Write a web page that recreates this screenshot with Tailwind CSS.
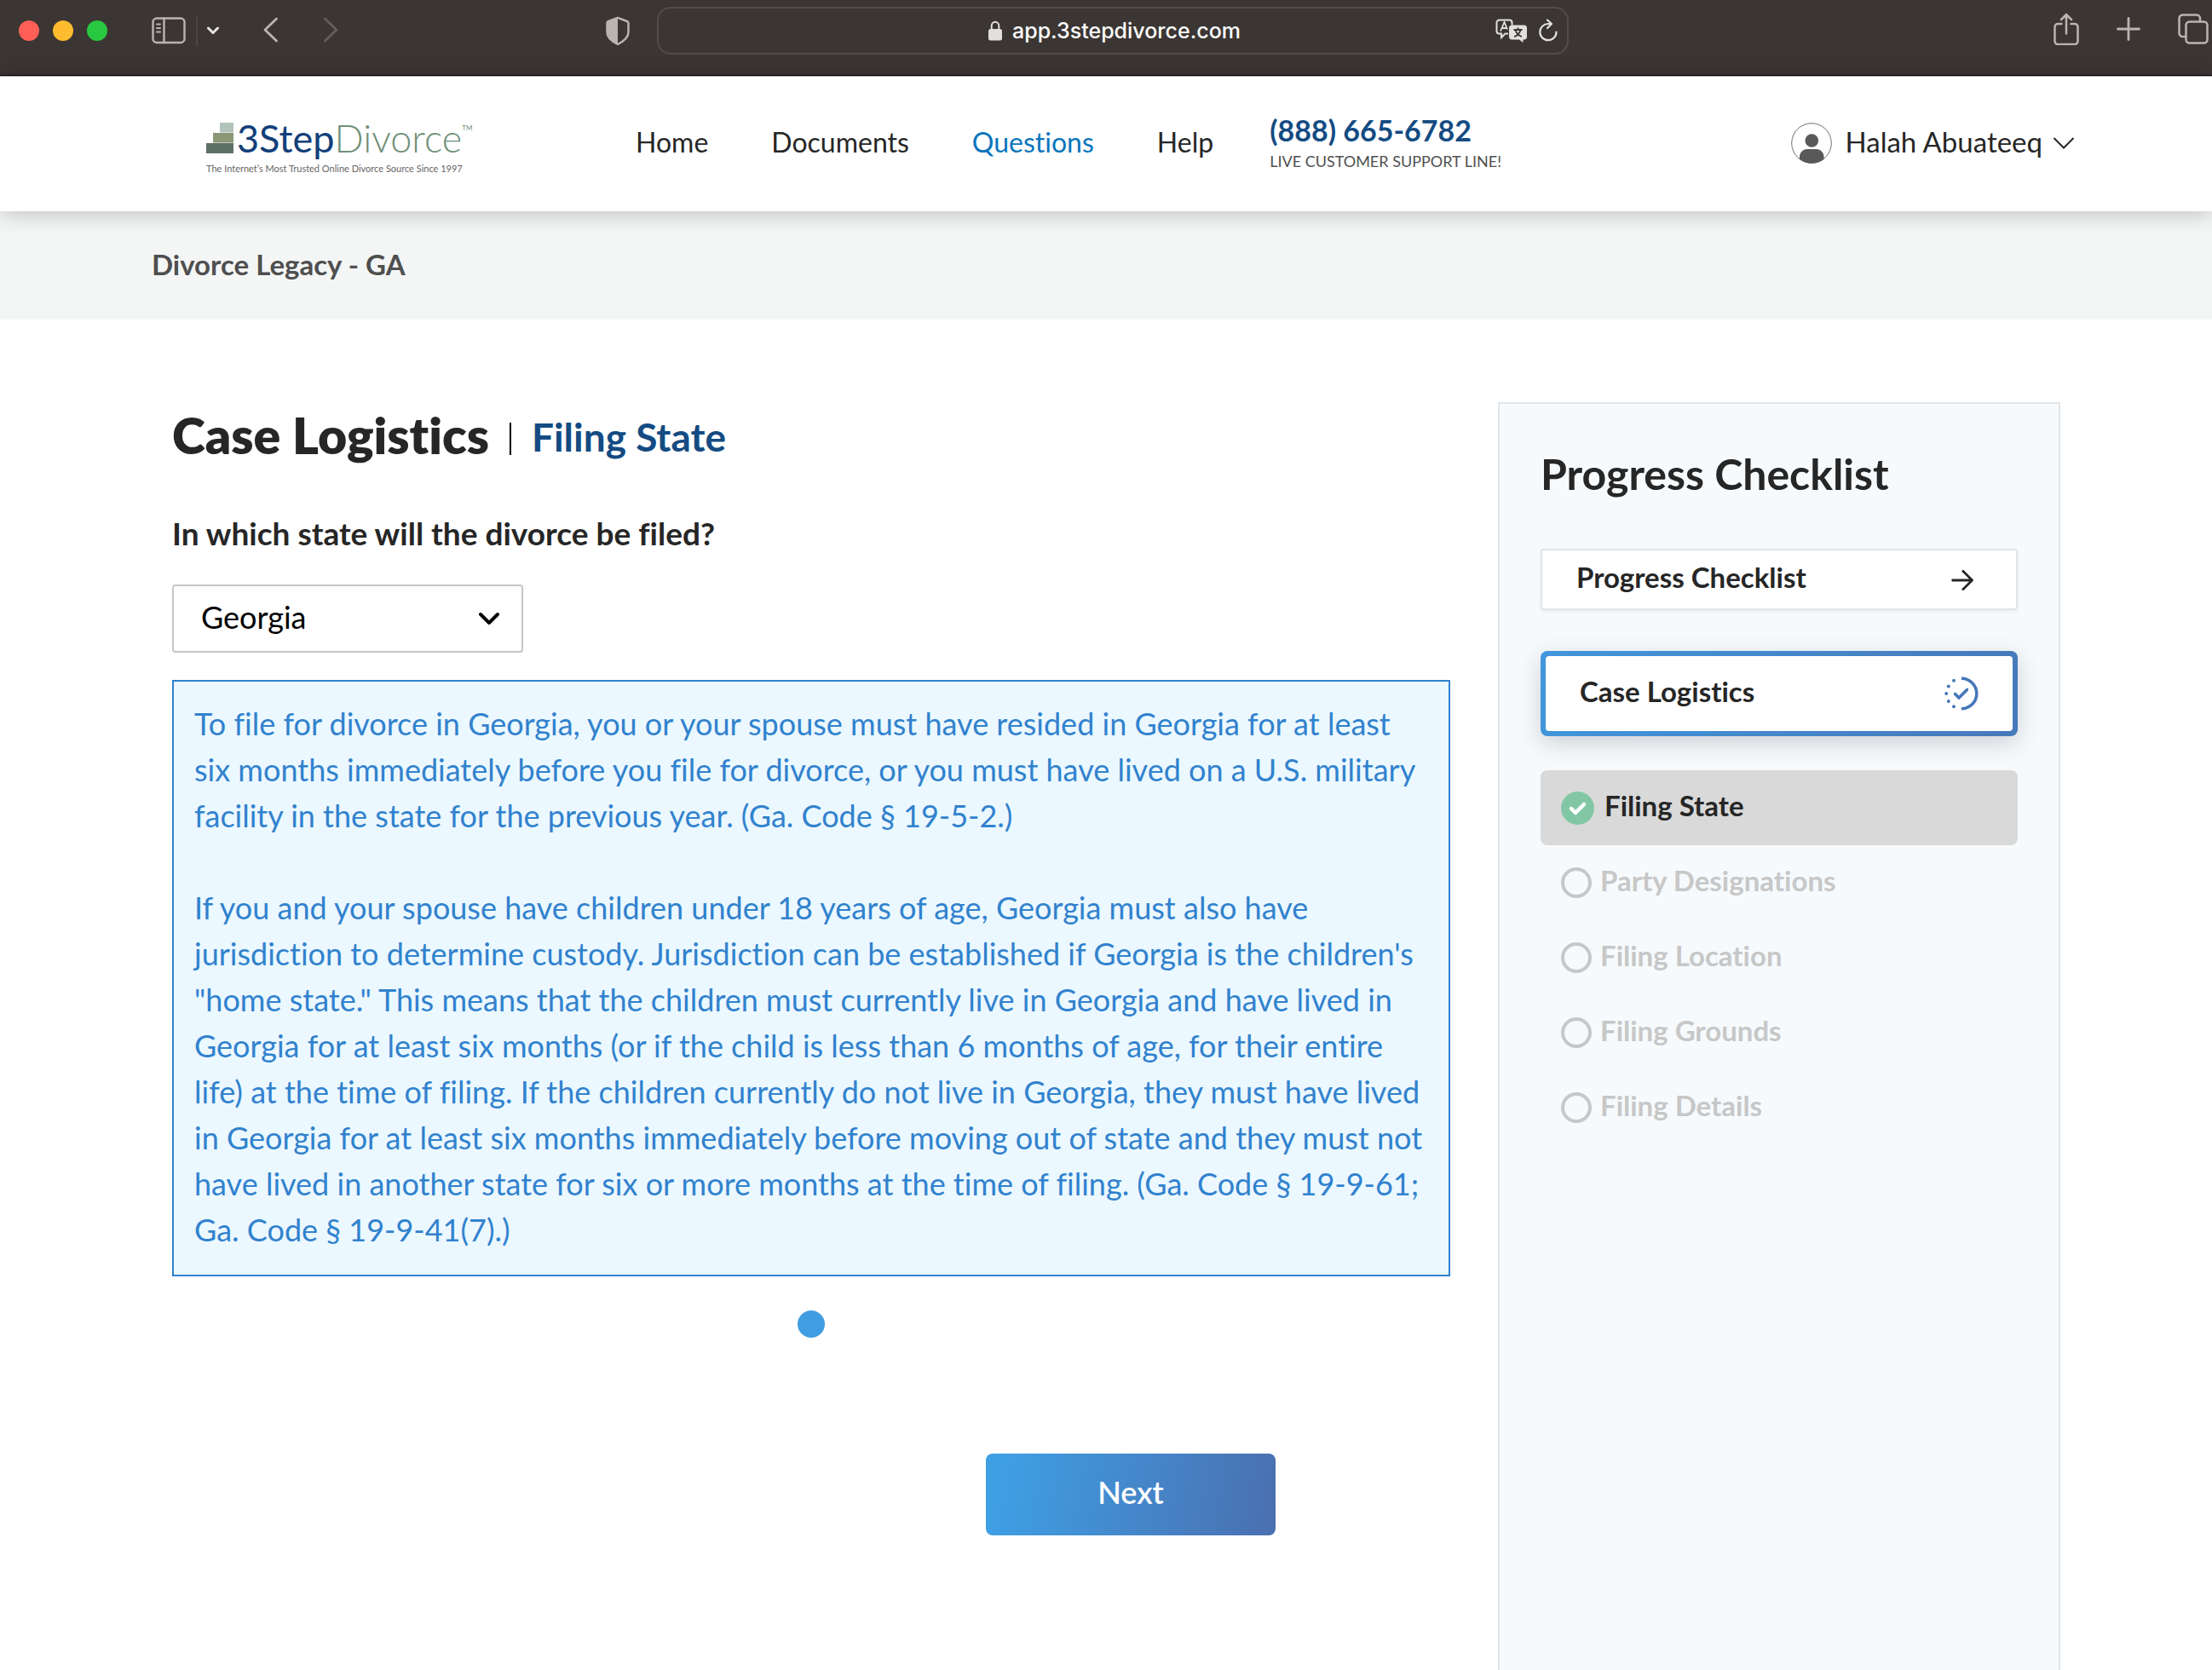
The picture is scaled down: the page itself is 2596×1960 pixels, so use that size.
<!DOCTYPE html>
<html lang="en">
<head>
<meta charset="utf-8">
<meta name="viewport" content="width=device-width, initial-scale=1">
<title>3StepDivorce - Case Logistics</title>
<script src="https://cdn.jsdelivr.net/npm/@tailwindcss/browser@4"></script>
</head>
<body class="flex min-h-screen flex-col bg-white font-[Lato,sans-serif] text-[#262626] [font-variant-ligatures:none]">

<!-- Browser toolbar -->
<div class="flex h-[89px] shrink-0 items-center border-b border-black bg-[#3b3633] pr-1 pb-4 pl-[22px] text-[#bab4b1]">
  <div class="flex gap-4">
    <span class="size-6 rounded-full bg-[#ff5f57]"></span>
    <span class="size-6 rounded-full bg-[#febc2e]"></span>
    <span class="size-6 rounded-full bg-[#28c840]"></span>
  </div>
  <button aria-label="Sidebar" class="ml-[52px]"><svg class="h-8 w-10" viewBox="0 0 40 32" fill="none" stroke="currentColor" stroke-width="2.4" stroke-linecap="round"><rect x="1.5" y="1.5" width="37" height="28.500" rx="4.500"/><path d="M14.500 2v28"/><path d="M6 8.500h4M6 13h4M6 17.500h4" stroke-width="2"/></svg></button>
  <span class="ml-3 h-9 w-0.5 bg-[#4a4542]"></span>
  <button aria-label="Tab groups" class="ml-[10px] text-[#e8e5e3]"><svg class="h-3 w-4" viewBox="0 0 16 12" fill="none" stroke="currentColor" stroke-width="3" stroke-linecap="round" stroke-linejoin="round"><path d="M2.500 3l5.500 5.500L13.500 3"/></svg></button>
  <button aria-label="Back" class="ml-[50px] pb-0.5"><svg class="h-8 w-5" viewBox="0 0 20 32" fill="none" stroke="currentColor" stroke-width="2.800" stroke-linecap="round" stroke-linejoin="round"><path d="M16.500 3L3 16l13.500 13"/></svg></button>
  <button aria-label="Forward" class="ml-[50px] pb-0.5 text-[#635e5b]"><svg class="h-8 w-5" viewBox="0 0 20 32" fill="none" stroke="currentColor" stroke-width="2.800" stroke-linecap="round" stroke-linejoin="round"><path d="M3.500 3L17 16 3.500 29"/></svg></button>
  <button aria-label="Privacy report" class="ml-[313px]"><svg class="h-9 w-7" viewBox="0 0 28 36"><path d="M14 2.800L25 7c1 .4 1.500 1 1.500 2v11c0 6-5 10-12.500 14C6 30 1.500 26 1.500 20V9c0-1 .5-1.600 1.500-2z" fill="none" stroke="currentColor" stroke-width="2.500" stroke-linejoin="round"/><path d="M14 2.800V34C6 30 1.500 26 1.500 20V9c0-1 .5-1.600 1.500-2z" fill="currentColor"/></svg></button>
  <div class="ml-8 flex h-14 flex-1 items-center rounded-2xl border-2 border-[#524d4a] pr-2.5 text-[#e2e0de]">
    <div class="flex flex-1 items-center justify-center gap-3 pl-24">
      <svg class="h-6 w-4" viewBox="0 0 16 24"><path d="M3.700 12V6.500a4.300 4.800 0 0 1 8.600 0V12" fill="none" stroke="currentColor" stroke-width="2"/><rect y="10" width="16" height="13.500" rx="2.500" fill="currentColor"/></svg>
      <input aria-label="Address" value="app.3stepdivorce.com" class="w-[276px] bg-transparent font-[Inter,sans-serif] text-[25px] font-medium leading-8 text-white outline-none">
    </div>
    <button aria-label="Translate"><svg class="h-7 w-[38px]" viewBox="0 0 38 28"><path d="M4.500 1.500h12a3 3 0 0 1 3 3v3M15 17.500h-3.500l-4.500 4.500v-4.500H4.500a3 3 0 0 1-3-3v-10a3 3 0 0 1 3-3" fill="none" stroke="currentColor" stroke-width="2"/><path d="M6 14.500L10.500 4l3.500 8.500M7.500 11h5.500" fill="none" stroke="currentColor" stroke-width="1.800"/><path d="M19.500 7.500h14a3.500 3.500 0 0 1 3.500 3.500v10a3.500 3.500 0 0 1-3.500 3.500H32.500V28L28 24.500h-8.500a3.500 3.500 0 0 1-3.500-3.500V11a3.500 3.500 0 0 1 3.500-3.500z" fill="currentColor"/><path d="M21.500 13h10M26.500 10.500V13M29.500 13c-1 4-4 7-7.500 8M23.500 13c1 4 4 7 7.500 8" fill="none" stroke="#3b3633" stroke-width="1.800"/></svg></button>
    <button aria-label="Reload" class="ml-3 pb-0.5"><svg class="h-7 w-6" viewBox="0 0 24 28" fill="none" stroke="currentColor" stroke-width="2.200" stroke-linecap="round" stroke-linejoin="round"><path d="M21.500 16.500A9.600 9.600 0 1 1 12 7h3.500M11 2.500L16 7l-5 5"/></svg></button>
  </div>
  <div class="flex w-[751px] items-center justify-end pb-1">
    <button aria-label="Share"><svg class="h-[38px] w-[30px]" viewBox="0 0 30 38" fill="none" stroke="currentColor" stroke-width="2.500" stroke-linecap="round" stroke-linejoin="round"><path d="M9.500 13H5a3.500 3.500 0 0 0-3.500 3.500v17A3.500 3.500 0 0 0 5 37h20a3.500 3.500 0 0 0 3.500-3.500v-17A3.500 3.500 0 0 0 25 13h-4.500M15 24.500V2.500M9 8l6-6 6 6"/></svg></button>
    <button aria-label="New tab" class="ml-11"><svg class="size-7" viewBox="0 0 28 28" fill="none" stroke="currentColor" stroke-width="2.800" stroke-linecap="round"><path d="M14 1.500v25M1.500 14h25"/></svg></button>
    <button aria-label="Tab overview" class="ml-11"><svg class="size-9" viewBox="0 0 36 36" fill="none" stroke="currentColor" stroke-width="2.500"><rect x="9.500" y="9.500" width="25" height="25" rx="4"/><path d="M9.500 27H5.500a4 4 0 0 1-4-4V5.500a4 4 0 0 1 4-4H22a4 4 0 0 1 4 4v4"/></svg></button>
  </div>
</div>

<!-- Site header -->
<header class="relative z-10 flex h-[159px] shrink-0 items-center border-t border-[#aaa] bg-white pr-[161px] pl-[242px] shadow-[0_2px_24px_rgba(0,0,0,0.24)]">
  <a href="#" class="w-[316px] pt-1.5">
    <span class="flex items-center gap-1">
      <svg class="mb-1 h-9 w-8 shrink-0" viewBox="0 0 32 36"><path fill="#b2c4ba" d="M16 0h16v11.500H16z"/><path fill="#8a9878" d="M8 12h24v11.500H8z"/><path fill="#5e7066" d="M0 24h32v12H0z"/></svg>
      <span class="flex pb-1 text-[45px] leading-12 text-[#123f7a]">3Step<span class="font-light text-[#6f9078]">Divorce</span><span class="pt-1 text-[8px] leading-4 text-[#6f9078]">TM</span></span>
    </span>
    <span class="block whitespace-nowrap text-[11px] leading-4 text-[#666]">The Internet’s Most Trusted Online Divorce Source Since 1997</span>
  </a>
  <nav class="ml-[188px] flex gap-[74px] pb-1 text-[32px] leading-10">
    <a href="#">Home</a>
    <a href="#">Documents</a>
    <a href="#" class="text-[#0a75bd]">Questions</a>
    <a href="#">Help</a>
  </nav>
  <div class="ml-[66px] flex flex-col">
    <a href="#" class="text-[34px] leading-10 font-bold text-[#144b82]">(888) 665-6782</a>
    <span class="text-[18px] leading-8 text-[#505050]">LIVE CUSTOMER SUPPORT LINE!</span>
  </div>
  <button class="ml-auto flex items-center pb-0.5 text-[33px] leading-10">
    <svg class="mr-4 size-12" viewBox="0 0 48 48"><circle cx="24" cy="24" r="23.300" fill="#fff" stroke="#707070"/><circle cx="24.300" cy="21" r="7.800" fill="#595959"/><path d="M10 43v-3c0-5 4-9 9-9h10.500c5 0 9 4 9 9v3a23.500 23.500 0 0 1-28.500 0z" fill="#595959"/></svg>
    <span class="pb-1">Halah Abuateeq</span>
    <svg class="ml-3 h-4 w-[26px]" viewBox="0 0 26 16" fill="none" stroke="currentColor" stroke-width="2"><path d="M1.500 2L13 13.500 24.500 2"/></svg>
  </button>
</header>

<div class="flex h-[127px] shrink-0 items-center bg-[#f4f6f6] pb-0.5 pl-[178px] text-[33px] font-bold text-[#4f4f4f]">Divorce Legacy - GA</div>

<div class="flex flex-1 gap-14 pt-[97px] pr-[178px] pl-[202px]">
  <main class="min-w-0 flex-1">
    <div class="flex h-[74px] items-center pt-1">
      <h1 class="text-[59px] leading-[72px] font-extrabold">Case Logistics</h1>
      <span class="mt-2 ml-6 h-[38px] w-0.5 bg-black"></span>
      <h2 class="ml-6 pt-1 text-[46px] leading-[72px] font-bold text-[#144b82]">Filing State</h2>
    </div>
    <label for="state" class="mt-14 block text-[37px] leading-12 font-bold">In which state will the divorce be filed?</label>
    <div class="relative mt-9 w-[412px]">
      <select id="state" class="block h-20 w-full appearance-none rounded border-2 border-[#c6c6c6] bg-white pb-1 pl-8 text-[36px] text-black"><option>Georgia</option></select>
      <svg class="pointer-events-none absolute top-8 right-6 h-4 w-[28px]" viewBox="0 0 28 16" fill="none" stroke="#000" stroke-width="4" stroke-linecap="round" stroke-linejoin="round"><path d="M2 3l10 10L22 3"/></svg>
    </div>
    <div class="mt-8 border-2 border-[#3182ce] bg-[#ebf8ff] pt-[22px] pr-5 pb-[26px] pl-6 text-[36px] leading-[54px] text-[#3182ce]">
      <p>To file for divorce in Georgia, you or your spouse must have resided in Georgia for at least six months immediately before you file for divorce, or you must have lived on a U.S. military facility in the state for the previous year. (Ga. Code § 19-5-2.)</p>
      <p class="mt-[54px]">If you and your spouse have children under 18 years of age, Georgia must also have jurisdiction to determine custody. Jurisdiction can be established if Georgia is the children's "home state." This means that the children must currently live in Georgia and have lived in Georgia for at least six months (or if the child is less than 6 months of age, for their entire life) at the time of filing. If the children currently do not live in Georgia, they must have lived in Georgia for at least six months immediately before moving out of state and they must not have lived in another state for six or more months at the time of filing. (Ga. Code § 19-9-61; Ga. Code § 19-9-41(7).)</p>
    </div>
    <div class="mx-auto mt-10 size-8 rounded-full bg-[#419de1]"></div>
    <div class="mt-[136px] flex justify-end pr-[205px]">
      <button class="h-24 w-[340px] rounded-lg bg-[linear-gradient(100deg,#3f9fe4_5%,#4a6fb0_100%)] pb-1.5 text-[36px] font-semibold text-white">Next</button>
    </div>
  </main>

  <aside class="w-[660px] shrink-0 border-2 border-b-0 border-[#e2e5e8] bg-[#f6fafd] px-12 pt-[52px]">
    <h2 class="text-[50px] leading-[60px] font-bold">Progress Checklist</h2>
    <a href="#" class="mt-[58px] flex h-[72px] items-center justify-between rounded border-2 border-[#e3e4e6] bg-white pr-[50px] pl-10 text-[33px] font-bold shadow-[0_2px_4px_rgba(0,0,0,0.06)]">
      <span class="pb-1">Progress Checklist</span>
      <svg class="size-[26px]" viewBox="0 0 26 26" fill="none" stroke="currentColor" stroke-width="2.800" stroke-linejoin="round"><path d="M.5 14H24M13 2.500L24.500 14 13 25.500"/></svg>
    </a>
    <a href="#" class="mt-12 block h-[100px] rounded-lg bg-[linear-gradient(100deg,#4196dc,#4779ba)] p-1.5 shadow-[0_8px_28px_rgba(0,0,0,0.17)]">
      <span class="flex h-full items-center justify-between rounded-sm bg-white pr-10 pl-10 text-[33px] font-bold">
        <span class="pb-1">Case Logistics</span>
        <svg class="size-10" viewBox="0 0 40 40" fill="none" stroke="#4676bb" stroke-width="3.600"><path d="M20 2.200a17.800 17.800 0 0 1 0 35.600"/><path d="M12.500 20.500l4.500 4.500 9.500-9.500" stroke-linecap="round"/><g fill="#4676bb" stroke="none"><circle cx="11" cy="4.800" r="2"/><circle cx="4.800" cy="11.500" r="2"/><circle cx="2.200" cy="20" r="2"/><circle cx="4.800" cy="29" r="2"/><circle cx="11" cy="35.200" r="2"/></g></svg>
      </span>
    </a>
    <ul class="mt-10 text-[33px] font-bold text-[#c7c7c7]">
      <li><a href="#" class="flex h-[88px] items-center gap-3 rounded-lg bg-[#d9d9d9] pl-6 text-[#262626]"><svg class="size-[39px]" viewBox="0 0 39 39"><circle cx="19.500" cy="19.500" r="19.500" fill="#82c7a5"/><path d="M12 20l5 5 10-10" fill="none" stroke="#fff" stroke-width="4.500" stroke-linecap="round" stroke-linejoin="round"/></svg><span class="pb-1">Filing State</span></a></li>
      <li class="flex h-[88px] items-center gap-2.5 pl-6"><span class="size-9 rounded-full border-4 border-[#c7c7c7]"></span><span class="pb-1">Party Designations</span></li>
      <li class="flex h-[88px] items-center gap-2.5 pl-6"><span class="size-9 rounded-full border-4 border-[#c7c7c7]"></span><span class="pb-1">Filing Location</span></li>
      <li class="flex h-[88px] items-center gap-2.5 pl-6"><span class="size-9 rounded-full border-4 border-[#c7c7c7]"></span><span class="pb-1">Filing Grounds</span></li>
      <li class="flex h-[88px] items-center gap-2.5 pl-6"><span class="size-9 rounded-full border-4 border-[#c7c7c7]"></span><span class="pb-1">Filing Details</span></li>
    </ul>
  </aside>
</div>
</body>
</html>
